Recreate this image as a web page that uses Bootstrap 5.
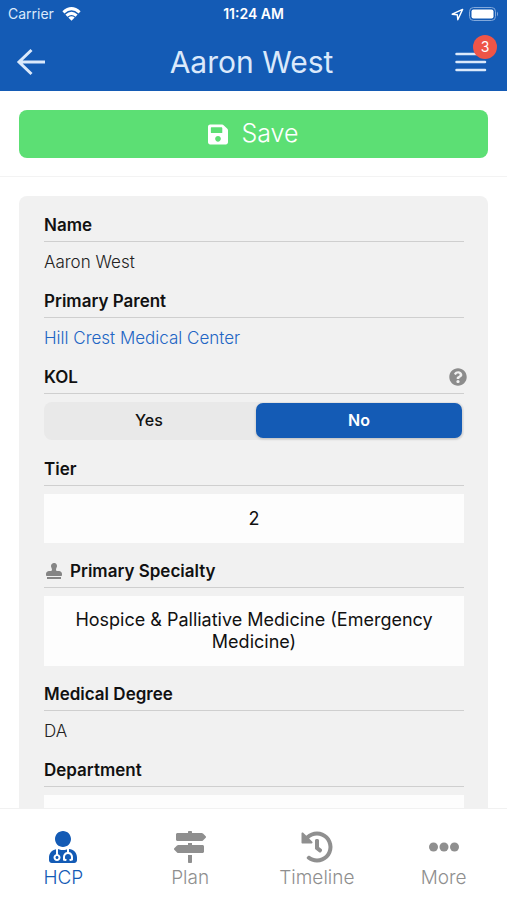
<!DOCTYPE html>
<html lang="en">
<head>
<meta charset="utf-8">
<meta name="viewport" content="width=device-width, initial-scale=1">
<title>Aaron West</title>
<link href="https://cdn.jsdelivr.net/npm/bootstrap@5.3.0/dist/css/bootstrap.min.css" rel="stylesheet">
<style>
  :root { --brand: #145bb5; --muted: #8f8f8f; }
  body { font-family: Inter, "Liberation Sans", sans-serif; font-size: 17px; line-height: 24px; color: #111; background: #fff; }
  svg { display: block; fill: currentColor; }
  .app-header { background: var(--brand); color: #dbe9fb; }
  .status-bar { font-size: 14px; line-height: 20px; padding: 4px 8px; }
  .status-bar > * { flex: 1 1 0; }
  .title-bar { height: 63px; padding: 4px 16px 0; }
  .title-bar h1 { font-size: 30px; line-height: 36px; font-weight: 400; }
  .icon-btn { background: none; border: 0; padding: 0; color: inherit; width: 32px; }
  .count-badge { top: -17px; right: -10px; width: 24px; height: 24px; font-size: 14px; line-height: 24px; background: #ee5548; color: #fff; }
  .save-area { padding: 19px 19px 18px; border-bottom: 1px solid #f3f3f3; }
  .save-btn, .save-btn:hover { background: #5cdf74; color: #fff; border: 0; border-radius: 8px; height: 48px; font-size: 25px; font-weight: 300; gap: 13px; }
  .scroll-area { min-height: 0; padding: 19px 19px 0; }
  .detail-panel { background: #f1f1f1; border-radius: 8px; padding: 17px 24px 17px 25px; gap: 15px; }
  .field-label { font-size: 17px; line-height: 24px; font-weight: 600; padding-bottom: 4px; margin-bottom: 8px; border-bottom: 1px solid #cfcfcf; }
  .field-value { color: #222; font-weight: 300; }
  .field-value a { color: #2265c4; text-decoration: none; }
  .help-btn { color: #8c8c8c; width: 18px; margin-right: -3px; }
  .stamp { color: #858585; margin: 0 8px 0 2px; }
  .segment { background: #e9e9e9; border-radius: 8px; padding: 1px 2px 2px; margin-bottom: 2px; gap: 4px; }
  .segment .btn { flex: 1 1 0; border: 0; border-radius: 7px; font-size: 16px; line-height: 23px; font-weight: 500; color: #111; }
  .segment .btn-check:checked + .btn { background: var(--brand); color: #fff; font-weight: 600; box-shadow: 0 1px 3px #0003; }
  .picker { background: #fdfdfd; color: #111; border: 0; border-radius: 0; font-size: 18px; line-height: 22px; min-height: 49px; padding: 13px 28px; margin-bottom: 1px; }
  .tab-bar { background: #fff; border-top: 1px solid #f1f1f1; }
  .tab-bar .nav-link { color: var(--muted); font-size: 19px; line-height: 24px; font-weight: 300; padding: 22px 0 10px; gap: 3px; }
  .tab-bar .nav-link.active { color: var(--brand); }
</style>
</head>
<body class="d-flex flex-column vh-100 overflow-hidden">
<header class="app-header flex-shrink-0">
  <div class="status-bar d-flex align-items-center">
    <div class="d-flex align-items-center gap-2"><span>Carrier</span>
      <svg width="19" height="14" viewBox="0 0 19 14" fill="none" stroke="#fff" stroke-width="3" aria-hidden="true"><path fill="none" d="M1.400 5.300Q9.500-2 17.600 5.300M4.400 8.600Q9.500 4.200 14.600 8.600"/><path stroke="none" fill="#fff" d="M6.300 10.500Q9.500 7.900 12.700 10.500L9.500 13.800z"/></svg>
    </div>
    <div class="text-center text-white fw-semibold">11:24 AM</div>
    <div class="d-flex align-items-center justify-content-end gap-1">
      <svg width="13" height="13" viewBox="0 0 13 13" aria-hidden="true"><path d="M1.200 6.200L11.600 1.400 6.800 11.800 6.300 6.700z" fill="none" stroke="#fff" stroke-width="1.400" stroke-linejoin="round"/></svg>
      <svg width="31" height="14" viewBox="0 0 31 14" aria-hidden="true"><rect x="1.500" y=".5" width="26" height="13" rx="4" fill="none" stroke="#82a9dc"/><rect x="3.500" y="2.500" width="22" height="9" rx="2" fill="#fff"/><path d="M29 4.500q2 2.500 0 5z" fill="#82a9dc"/></svg>
    </div>
  </div>
  <div class="title-bar d-flex align-items-center justify-content-between">
    <button class="icon-btn" type="button" aria-label="Back"><svg width="30" height="28" viewBox="0 0 30 28" aria-hidden="true"><path d="M15.500 2L3 14l12.500 12M3 14h26" fill="none" stroke="currentColor" stroke-width="3"/></svg></button>
    <h1 class="m-0">Aaron West</h1>
    <button class="icon-btn position-relative me-1" type="button" aria-label="Menu, 3 notifications"><svg width="32" height="20" viewBox="0 0 32 20" aria-hidden="true"><path d="M1.500 2h28.500M1.500 10h28.500M1.500 18h28.500" stroke="currentColor" stroke-width="2.500" stroke-linecap="round"/></svg><span class="count-badge position-absolute rounded-circle">3</span></button>
  </div>
</header>

<div class="save-area flex-shrink-0">
  <button class="btn save-btn w-100 d-flex align-items-center justify-content-center p-0" type="button">
    <svg width="20" height="23" viewBox="0 0 448 512" aria-hidden="true"><path d="M433.941 129.941l-83.882-83.882A48 48 0 0 0 316.118 32H48C21.490 32 0 53.490 0 80v352c0 26.510 21.490 48 48 48h352c26.510 0 48-21.490 48-48V163.882a48 48 0 0 0-14.059-33.941zM224 416c-35.346 0-64-28.654-64-64 0-35.346 28.654-64 64-64s64 28.654 64 64c0 35.346-28.654 64-64 64zm96-304.520V212c0 6.627-5.373 12-12 12H76c-6.627 0-12-5.373-12-12V108c0-6.627 5.373-12 12-12h228.520c3.183 0 6.235 1.264 8.485 3.515l3.480 3.480A11.996 11.996 0 0 1 320 111.480z"/></svg><span>Save</span>
  </button>
</div>

<main class="scroll-area flex-fill overflow-hidden">
  <div class="detail-panel d-flex flex-column">
    <section><h2 class="field-label">Name</h2><div class="field-value">Aaron West</div></section>
    <section><h2 class="field-label">Primary Parent</h2><div class="field-value"><a href="#">Hill Crest Medical Center</a></div></section>
    <section>
      <div class="field-label d-flex align-items-center justify-content-between"><span id="kol">KOL</span>
        <button class="icon-btn help-btn" type="button" aria-label="About KOL"><svg width="18" height="18" viewBox="0 0 512 512" aria-hidden="true"><path d="M504 256c0 136.997-111.043 248-248 248S8 392.997 8 256C8 119.083 119.043 8 256 8s248 111.083 248 248zM262.655 90c-54.497 0-89.255 22.957-116.549 63.758-3.536 5.286-2.353 12.415 2.715 16.258l34.699 26.310c5.205 3.947 12.621 3.008 16.665-2.122 17.864-22.658 30.113-35.797 57.303-35.797 20.429 0 45.698 13.148 45.698 32.958 0 14.976-12.363 22.667-32.534 33.976C247.128 238.528 216 254.941 216 296v4c0 6.627 5.373 12 12 12h56c6.627 0 12-5.373 12-12v-1.333c0-28.462 83.186-29.647 83.186-106.667 0-58.002-60.165-102-116.531-102zM256 338c-25.365 0-46 20.635-46 46 0 25.364 20.635 46 46 46s46-20.636 46-46c0-25.365-20.635-46-46-46z"/></svg></button>
      </div>
      <div class="segment d-flex" role="radiogroup" aria-labelledby="kol">
        <input class="btn-check" type="radio" name="kol" id="kol-yes"><label class="btn" for="kol-yes">Yes</label>
        <input class="btn-check" type="radio" name="kol" id="kol-no" checked><label class="btn" for="kol-no">No</label>
      </div>
    </section>
    <section><h2 class="field-label" id="tier">Tier</h2><button class="btn picker w-100" type="button" aria-describedby="tier">2</button></section>
    <section>
      <h2 class="field-label d-flex align-items-center" id="specialty"><svg class="stamp" width="16" height="16" viewBox="0 0 512 512" aria-hidden="true"><path d="M32 512h448v-64H32v64zm384-256h-66.560c-16.260 0-29.440-13.180-29.440-29.440v-9.460c0-27.370 8.880-53.410 21.460-77.720 9.110-17.610 12.900-38.390 9.050-60.420-6.770-38.780-38.470-70.700-77.260-77.450C212.620-9.040 160 37.330 160 96c0 14.160 3.120 27.540 8.690 39.580C182.020 164.430 192 194.700 192 226.490v.07c0 16.260-13.180 29.440-29.440 29.440H96c-53.020 0-96 42.980-96 96v32c0 17.670 14.330 32 32 32h448c17.670 0 32-14.330 32-32v-32c0-53.020-42.980-96-96-96z"/></svg>Primary Specialty</h2>
      <button class="btn picker w-100" type="button" aria-describedby="specialty">Hospice &amp; Palliative Medicine (Emergency Medicine)</button>
    </section>
    <section><h2 class="field-label">Medical Degree</h2><div class="field-value">DA</div></section>
    <section><h2 class="field-label" id="department">Department</h2><button class="btn picker w-100" type="button" aria-labelledby="department"></button></section>
  </div>
</main>

<nav class="tab-bar nav nav-justified flex-nowrap flex-shrink-0" aria-label="Main">
  <a class="nav-link active d-flex flex-column align-items-center w-25" href="#" aria-current="page">
    <svg width="28" height="32" viewBox="0 0 448 512" aria-hidden="true"><path d="M224 256c70.700 0 128-57.300 128-128S294.700 0 224 0 96 57.300 96 128s57.300 128 128 128zM104 424c0 13.300 10.700 24 24 24s24-10.700 24-24-10.700-24-24-24-24 10.700-24 24zm216-135.400v49c36.500 7.400 64 39.800 64 78.400v41.700c0 7.600-5.400 14.200-12.900 15.700l-32.200 6.400c-4.300.9-8.500-1.900-9.400-6.300l-3.100-15.700c-.9-4.300 1.900-8.600 6.300-9.400l19.300-3.900V416c0-62.800-96-65.100-96 1.900v26.700l19.300 3.900c4.300.9 7.100 5.100 6.300 9.400l-3.100 15.700c-.9 4.300-5.100 7.100-9.400 6.300l-31.200-4.200c-7.900-1.100-13.800-7.800-13.800-15.900V416c0-38.600 27.500-70.900 64-78.400v-45.200c-2.200.7-4.400 1.100-6.600 1.900-18 6.300-37.300 9.800-57.400 9.800s-39.400-3.500-57.400-9.800c-7.400-2.600-14.900-4.200-22.600-5.200v81.600c23.100 6.900 40 28.100 40 53.400 0 30.900-25.100 56-56 56s-56-25.100-56-56c0-25.300 16.900-46.500 40-53.400v-80.400C48.500 301 0 355.800 0 422.400v44.800C0 491.900 20.100 512 44.800 512h358.400c24.700 0 44.800-20.100 44.800-44.800v-44.800c0-72-56.800-130.300-128-133.800z"/></svg><span>HCP</span></a>
  <a class="nav-link d-flex flex-column align-items-center w-25" href="#">
    <svg width="32" height="32" viewBox="0 0 512 512" aria-hidden="true"><path d="M507.310 84.690L464 41.370c-6-6-14.140-9.370-22.630-9.370H288V16c0-8.840-7.160-16-16-16h-32c-8.840 0-16 7.160-16 16v16H56c-13.250 0-24 10.750-24 24v80c0 13.250 10.750 24 24 24h385.370c8.490 0 16.620-3.370 22.630-9.370l43.310-43.310c6.250-6.260 6.250-16.380 0-22.630zM224 496c0 8.840 7.160 16 16 16h32c8.840 0 16-7.160 16-16V384h-64v112zm232-272H288v-32h-64v32H70.630c-8.490 0-16.620 3.370-22.630 9.370L4.690 276.690c-6.250 6.250-6.250 16.380 0 22.630L48 342.630c6 6 14.140 9.370 22.630 9.370H456c13.250 0 24-10.750 24-24v-80c0-13.250-10.750-24-24-24z"/></svg><span>Plan</span></a>
  <a class="nav-link d-flex flex-column align-items-center w-25" href="#">
    <svg width="32" height="32" viewBox="0 0 512 512" aria-hidden="true"><path d="M504 255.531c.253 136.640-111.180 248.372-247.820 248.468-59.015.042-113.223-20.530-155.822-54.911-11.077-8.940-11.905-25.541-1.839-35.607l11.267-11.267c8.609-8.609 22.353-9.551 31.891-1.984C173.062 425.135 212.781 440 256 440c101.705 0 184-82.311 184-184 0-101.705-82.311-184-184-184-48.814 0-93.149 18.969-126.068 49.932l50.754 50.754c10.080 10.080 2.941 27.314-11.313 27.314H24c-8.837 0-16-7.163-16-16V38.627c0-14.254 17.234-21.393 27.314-11.314l49.372 49.372C129.209 34.136 189.552 8 256 8c136.810 0 247.747 110.780 248 247.531zm-180.912 78.784l9.823-12.630c8.138-10.463 6.253-25.542-4.210-33.679L288 256.349V152c0-13.255-10.745-24-24-24h-16c-13.255 0-24 10.745-24 24v135.651l65.409 50.874c10.463 8.137 25.541 6.253 33.679-4.210z"/></svg><span>Timeline</span></a>
  <a class="nav-link d-flex flex-column align-items-center w-25" href="#">
    <svg width="32" height="32" viewBox="0 0 32 32" aria-hidden="true"><circle cx="5.500" cy="16" r="4.500"/><circle cx="16" cy="16" r="4.500"/><circle cx="26.500" cy="16" r="4.500"/></svg><span>More</span></a>
</nav>
<script src="https://cdn.jsdelivr.net/npm/bootstrap@5.3.0/dist/js/bootstrap.bundle.min.js"></script>
</body>
</html>
